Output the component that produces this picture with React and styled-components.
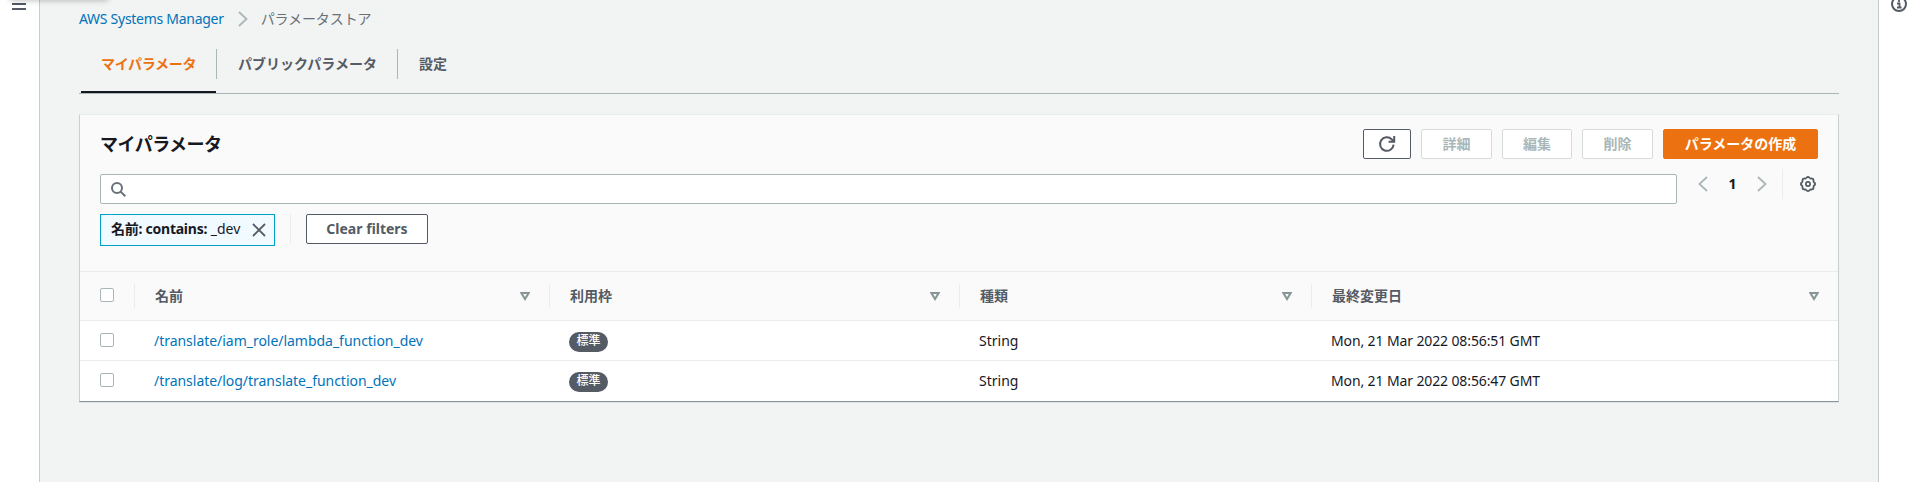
import React from "react";
import styled, { createGlobalStyle } from "styled-components";

const Global = createGlobalStyle`
  * { box-sizing: border-box; }
  body {
    margin: 0;
    background: #fff;
    color: #16191f;
    font-family: "Noto Sans", "Noto Sans CJK JP", sans-serif;
    font-size: 14px;
    line-height: 20px;
  }
  button { font-family: inherit; }
`;

const Shell = styled.div`
  display: grid;
  grid-template-columns: 40px 1fr 39px;
  height: 482px;
  overflow: hidden;
  position: relative;
`;
const NavShadow = styled.div`
  position: absolute;
  top: -10px;
  left: 10px;
  width: 98px;
  height: 10px;
  box-shadow: 0 0 6px rgba(0, 0, 0, 0.3);
`;
const LeftRail = styled.aside`
  border-right: 1px solid #c6cdcd;
  padding: 3px 0 0 12px;
  svg { display: block; }
`;
const RightRail = styled.aside`
  border-left: 1px solid #c6cdcd;
  padding-left: 12px;
  svg { display: block; margin-top: -4px; }
`;
const Main = styled.main`
  background: #f2f3f3;
  padding: 9px 39px 0;
`;
const Breadcrumbs = styled.nav`
  display: flex;
  align-items: center;
  height: 20px;
`;
const Crumb = styled.span`
  color: ${(p) => (p.$link ? "#0073bb" : "#687078")};
  letter-spacing: ${(p) => p.$ls || 0}px;
  white-space: nowrap;
`;
const CrumbChevron = styled.svg`
  margin: 0 13px 0 14px;
`;
const Tabs = styled.div`
  display: flex;
  height: 65px;
  padding-top: 20px;
  border-bottom: 1px solid #aab7b8;
`;
const Tab = styled.div`
  position: relative;
  height: 30px;
  padding: 5px 0 0 ${(p) => p.$left || 21}px;
  width: ${(p) => p.$width}px;
  border-right: ${(p) => (p.$last ? "none" : "1px solid #aab7b8")};
  color: ${(p) => (p.$active ? "#ec7211" : "#545b64")};
  font-weight: 700;
  white-space: nowrap;
  letter-spacing: ${(p) => p.$ls || 0}px;
`;
const ActiveLine = styled.span`
  position: absolute;
  left: 2px;
  right: 0;
  top: 42px;
  height: 2px;
  background: #16191f;
`;
const Card = styled.section`
  margin-top: 20px;
  border: 1px solid #c8cfcf;
  border-top-color: #eaeded;
  border-bottom-color: #879596;
  box-shadow: 0 1px 0 #dfe4e4;
  background: #fff;
`;
const CardHeader = styled.header`
  height: 157px;
  padding: 14px 20px 0;
  background: #fafafa;
  border-bottom: 1px solid #eaeded;
`;
const HeaderRow = styled.div`
  display: flex;
  justify-content: space-between;
  align-items: center;
  height: 30px;
`;
const Title = styled.h2`
  margin: 0;
  font-size: 18px;
  line-height: 22px;
  font-weight: 700;
  letter-spacing: -0.5px;
`;
const Actions = styled.div`
  display: flex;
  gap: 10px;
`;
const Button = styled.button`
  display: flex;
  align-items: center;
  justify-content: center;
  width: ${(p) => p.$width}px;
  height: 30px;
  padding: 0;
  border: 1px solid ${(p) => (p.$primary ? "#ec7211" : p.disabled ? "#d5dbdb" : "#545b64")};
  border-radius: 2px;
  background: ${(p) => (p.$primary ? "#ec7211" : "#fff")};
  color: ${(p) => (p.$primary ? "#fff" : p.disabled ? "#aab7b8" : "#545b64")};
  font-size: 14px;
  line-height: 20px;
  font-weight: 700;
  white-space: nowrap;
`;
const SearchRow = styled.div`
  display: flex;
  margin-top: 15px;
`;
const SearchBox = styled.div`
  flex: 1;
  height: 30px;
  padding: 7px 10px;
  border: 1px solid #aab7b8;
  border-radius: 2px;
  background: #fff;
  svg { display: block; }
`;
const Pager = styled.div`
  display: flex;
  align-items: center;
  height: 30px;
  margin-top: -5px;
  padding: 0 2px 0 21px;
`;
const PageNumber = styled.span`
  width: 49px;
  text-align: center;
  font-weight: 700;
`;
const PagerChevron = styled.svg`
  flex: none;
`;
const Divider = styled.span`
  width: 1px;
  height: 30px;
  background: #eaeded;
  margin-left: ${(p) => p.$left || 0}px;
  margin-right: ${(p) => p.$right || 0}px;
`;
const Filters = styled.div`
  display: flex;
  margin-top: 10px;
`;
const Token = styled.div`
  display: flex;
  align-items: center;
  width: 175px;
  height: 32px;
  padding: 0 0 2px 10px;
  border: 1px solid #00a1c9;
  background: #f1faff;
  white-space: pre;
  b { letter-spacing: -0.25px; }
  svg { margin: 2px 8px 0 auto; }
`;
const Table = styled.div`
  display: grid;
`;
const Row = styled.div`
  display: grid;
  grid-template-columns: 55px 415px 410px 352px 1fr;
  align-items: center;
  height: ${(p) => (p.$head ? 49 : 40)}px;
  border-bottom: ${(p) => (p.$last ? "none" : "1px solid #eaeded")};
  background: ${(p) => (p.$head ? "#fafafa" : "#fff")};
`;
const HeadCell = styled.div`
  display: flex;
  align-items: center;
  justify-content: space-between;
  height: 24px;
  padding: 0 19px 0 20px;
  border-right: ${(p) => (p.$last ? "none" : "1px solid #eaeded")};
  color: #545b64;
  font-weight: 700;
`;
const Cell = styled.div`
  padding: 0 20px 0 ${(p) => p.$left || 19}px;
  letter-spacing: ${(p) => p.$ls || 0}px;
  white-space: nowrap;
  color: ${(p) => (p.$link ? "#0073bb" : "#16191f")};
`;
const Checkbox = styled.span`
  display: block;
  width: 14px;
  height: 14px;
  margin-bottom: 2px;
  border: 1px solid #aab7b8;
  border-radius: 2px;
  background: #fff;
`;
const Badge = styled.span`
  display: block;
  width: 39px;
  height: 20px;
  margin-top: 2px;
  border-radius: 10px;
  background: #545b64;
  color: #fff;
  font-size: 12px;
  font-weight: 500;
  line-height: 18px;
  text-align: center;
`;

const SortIcon = () => (
  <svg width="10" height="9" viewBox="0 0 10 9">
    <path d="M1.4 1.1h7.2L5 7z" fill="none" stroke="#879596" strokeWidth="2" />
  </svg>
);
const Chevron = ({ flip }) => (
  <PagerChevron width="10" height="16" viewBox="0 0 10 16">
    <path d={flip ? "M1 1l7.5 7L1 15" : "M9 1L1.5 8 9 15"} fill="none" stroke="#aab7b8" strokeWidth="1.8" />
  </PagerChevron>
);

/* Eight-lobed outline of the settings gear, centred on 8,8. */
const gearPath =
  Array.from({ length: 49 }, (_, i) => {
    const a = (i / 48) * Math.PI * 2;
    const r = 6.6 + 0.55 * Math.cos(a * 8);
    return `${i ? "L" : "M"}${(8 + r * Math.cos(a)).toFixed(2)} ${(8 + r * Math.sin(a)).toFixed(2)}`;
  }).join("") + "z";

const rows = [
  { name: "/translate/iam_role/lambda_function_dev", date: "Mon, 21 Mar 2022 08:56:51 GMT" },
  { name: "/translate/log/translate_function_dev", date: "Mon, 21 Mar 2022 08:56:47 GMT" },
];

export default function App() {
  return (
    <>
      <Global />
      <Shell>
        <LeftRail>
          <svg width="14" height="8" viewBox="0 0 14 8">
            <path d="M0 1h14M0 6h14" stroke="#545b64" strokeWidth="2" />
          </svg>
        </LeftRail>
        <Main>
          <Breadcrumbs>
            <Crumb $link $ls={-0.28}>AWS Systems Manager</Crumb>
            <CrumbChevron width="10" height="16" viewBox="0 0 10 16">
              <path d="M1 1l7.5 7L1 15" fill="none" stroke="#aab7b8" strokeWidth="1.8" />
            </CrumbChevron>
            <Crumb $ls={-0.1}>パラメータストア</Crumb>
          </Breadcrumbs>
          <Tabs>
            <Tab $active $width={138} $left={22} $ls={-0.3}>
              マイパラメータ
              <ActiveLine />
            </Tab>
            <Tab $width={181}>パブリックパラメータ</Tab>
            <Tab $last $width={80}>設定</Tab>
          </Tabs>
          <Card>
            <CardHeader>
              <HeaderRow>
                <Title>マイパラメータ</Title>
                <Actions>
                  <Button $width={48}>
                    <svg width="18" height="18" viewBox="0 0 18 18">
                      <path d="M15.6 9.6A6.8 6.8 0 1 1 13.8 4.4l1.6 1.8M16.2 1v5.8H10.6" fill="none" stroke="#545b64" strokeWidth="2" />
                    </svg>
                  </Button>
                  <Button $width={71} disabled>詳細</Button>
                  <Button $width={70} disabled>編集</Button>
                  <Button $width={71} disabled>削除</Button>
                  <Button $width={155} $primary>パラメータの作成</Button>
                </Actions>
              </HeaderRow>
              <SearchRow>
                <SearchBox>
                  <svg width="16" height="16" viewBox="0 0 16 16">
                    <circle cx="6" cy="6" r="5" fill="none" stroke="#687078" strokeWidth="2" />
                    <path d="M9.6 9.6l4.7 4.7" stroke="#687078" strokeWidth="2" />
                  </svg>
                </SearchBox>
                <Pager>
                  <Chevron />
                  <PageNumber>1</PageNumber>
                  <Chevron flip />
                  <Divider $left={15} $right={17} />
                  <svg width="16" height="16" viewBox="0 0 16 16">
                    <path d={gearPath} fill="none" stroke="#545b64" strokeWidth="1.8" />
                    <circle cx="8" cy="8" r="2.1" fill="none" stroke="#545b64" strokeWidth="1.7" />
                  </svg>
                </Pager>
              </SearchRow>
              <Filters>
                <Token>
                  <b>名前: contains:</b> _dev
                  <svg width="14" height="14" viewBox="0 0 14 14">
                    <path d="M1 1l12 12M13 1L1 13" stroke="#545b64" strokeWidth="1.8" />
                  </svg>
                </Token>
                <Divider $left={15} $right={15} />
                <Button $width={122}>Clear filters</Button>
              </Filters>
            </CardHeader>
            <Table>
              <Row $head>
                <HeadCell><Checkbox /></HeadCell>
                <HeadCell>名前<SortIcon /></HeadCell>
                <HeadCell>利用枠<SortIcon /></HeadCell>
                <HeadCell>種類<SortIcon /></HeadCell>
                <HeadCell $last>最終変更日<SortIcon /></HeadCell>
              </Row>
              {rows.map((r, i) => (
                <Row key={r.name} $last={i === rows.length - 1}>
                  <Cell $left={20}><Checkbox /></Cell>
                  <Cell $link $ls={-0.03}>{r.name}</Cell>
                  <Cell><Badge>標準</Badge></Cell>
                  <Cell>String</Cell>
                  <Cell $ls={-0.12}>{r.date}</Cell>
                </Row>
              ))}
            </Table>
          </Card>
        </Main>
        <RightRail>
          <svg width="16" height="16" viewBox="0 0 16 16">
            <circle cx="8" cy="8" r="7" fill="none" stroke="#545b64" strokeWidth="2" />
            <path d="M6 7.5h2.5v4M6 11.5h4.5M8 4v2" fill="none" stroke="#545b64" strokeWidth="1.8" />
          </svg>
        </RightRail>
        <NavShadow />
      </Shell>
    </>
  );
}
